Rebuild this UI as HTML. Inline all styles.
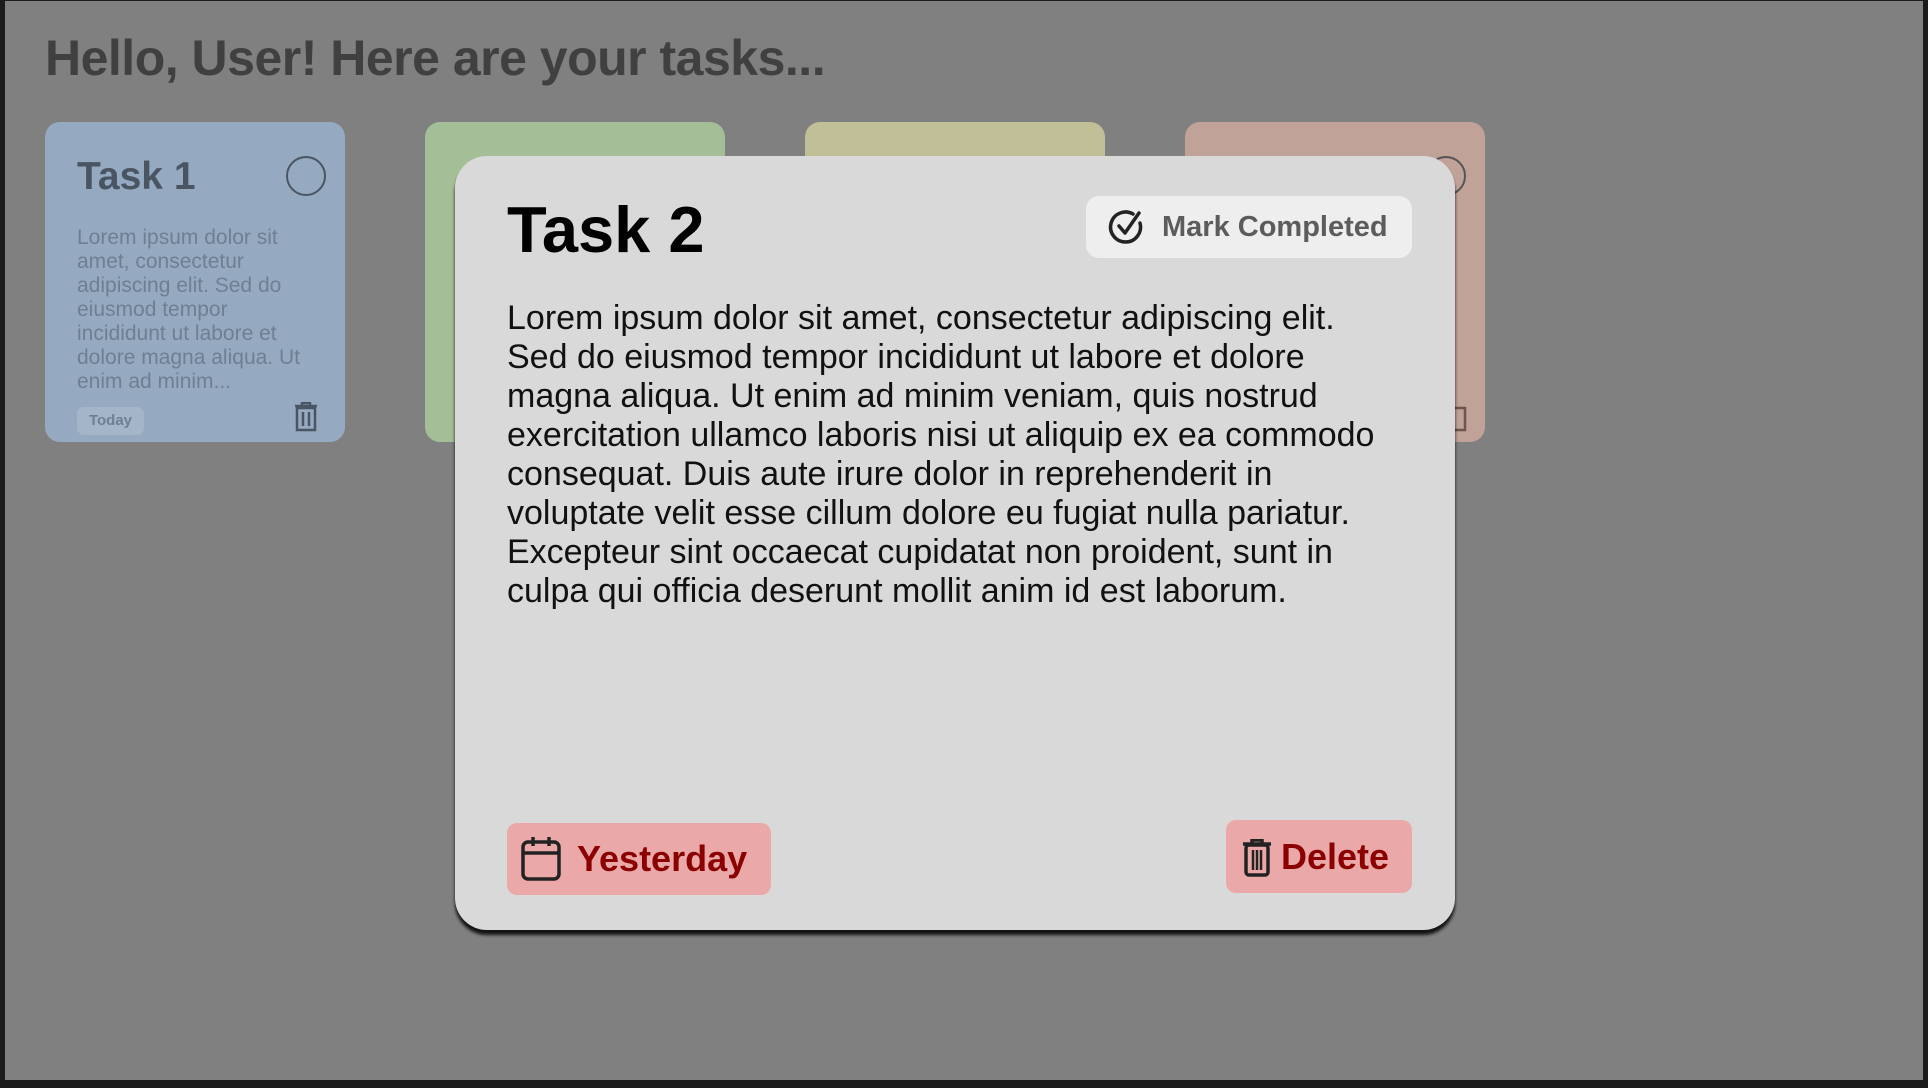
<!DOCTYPE html>
<html><head><meta charset="utf-8"><style>
*{margin:0;padding:0;box-sizing:border-box}
html,body{width:1928px;height:1088px;overflow:hidden;background:#1c1c1c;font-family:"Liberation Sans",Arial,sans-serif}
#bg{position:absolute;left:5px;top:1px;width:1918px;height:1079px;background:#808080}
h1{position:absolute;left:45px;top:29px;font-size:50px;font-weight:bold;color:#404040;letter-spacing:-0.5px}
.card{position:absolute;top:122px;width:300px;height:320px;border-radius:15px}
.c1{left:45px;background:#95aac0}
.c2{left:425px;background:#a4bf98}
.c3{left:805px;background:#c0bf98}
.c4{left:1185px;background:#c0a298}
.ct{position:absolute;left:32px;top:33px;font-size:39px;font-weight:bold;color:#4a5563}
.circ{position:absolute;left:241px;top:34px;width:40px;height:40px;border:2px solid #4a5563;border-radius:50%}
.cb{position:absolute;left:32px;top:104px;width:260px;font-size:21px;line-height:24px;color:#6f7f92;white-space:nowrap}
.today{position:absolute;left:32px;top:285px;width:67px;height:28px;border-radius:7px;background:#a4b5c8;color:#6f7f92;font-size:15px;font-weight:bold;text-align:center;line-height:28px}
.tr{position:absolute;left:248px;top:280px}
#modal{position:absolute;left:455px;top:156px;width:1000px;height:774px;background:#d9d9d9;border-radius:32px;box-shadow:0 5px 3px rgba(0,0,0,0.85)}
#t2{position:absolute;left:52px;top:36px;font-size:65px;font-weight:bold;color:#000}
#mc{position:absolute;left:631px;top:40px;width:326px;height:62px;background:#eeeeee;border-radius:13px}
#mc span{position:absolute;left:76px;top:15px;font-size:29px;font-weight:bold;color:#5c5c5c}
#mc svg{position:absolute;left:20px;top:11px}
#body{position:absolute;left:52px;top:143px;font-size:34px;line-height:39px;color:#111;white-space:nowrap}
.btn{position:absolute;background:#eba8a8;border-radius:10px;color:#8b0000;font-weight:bold;font-size:36px}
#yes{left:52px;top:667px;width:264px;height:72px}
#yes span{position:absolute;left:70px;top:15px}
#yes svg{position:absolute;left:13px;top:13px}
#del{left:771px;top:664px;width:186px;height:73px}
#del span{position:absolute;left:55px;top:16px}
#del svg{position:absolute;left:15px;top:19px}
</style></head><body>
<div id="bg"></div>
<h1>Hello, User! Here are your tasks...</h1>
<div class="card c1"><div class="ct">Task 1</div><div class="circ"></div>
<div class="cb">Lorem ipsum dolor sit<br>amet, consectetur<br>adipiscing elit. Sed do<br>eiusmod tempor<br>incididunt ut labore et<br>dolore magna aliqua. Ut<br>enim ad minim...</div>
<div class="today">Today</div>
<svg class="tr" width="26" height="30" viewBox="0 0 26 30"><path d="M2 4h22M9 4V1h8v3M4 6h18v22H4z" fill="none" stroke="#4a5563" stroke-width="2.5"/><path d="M10 10v14M16 10v14" stroke="#4a5563" stroke-width="2.5"/></svg>
</div>
<div class="card c2"></div>
<div class="card c3"></div>
<div class="card c4"><div class="circ" style="border-color:#555"></div>
<svg class="tr" style="left:258px" width="26" height="30" viewBox="0 0 26 30"><path d="M4 6h18v22H4z" fill="none" stroke="#6a5550" stroke-width="2.5"/></svg></div>
<div id="modal">
<div id="t2">Task 2</div>
<div id="mc"><svg width="40" height="40" viewBox="0 0 40 40"><path d="M34 16A15 15 0 1 1 27 7" fill="none" stroke="#222" stroke-width="3.5" stroke-linecap="round"/><path d="M13 19l6 7L33 6" fill="none" stroke="#222" stroke-width="3.5" stroke-linecap="round" stroke-linejoin="round"/></svg><span>Mark Completed</span></div>
<div id="body">Lorem ipsum dolor sit amet, consectetur adipiscing elit.<br>Sed do eiusmod tempor incididunt ut labore et dolore<br>magna aliqua. Ut enim ad minim veniam, quis nostrud<br>exercitation ullamco laboris nisi ut aliquip ex ea commodo<br>consequat. Duis aute irure dolor in reprehenderit in<br>voluptate velit esse cillum dolore eu fugiat nulla pariatur.<br>Excepteur sint occaecat cupidatat non proident, sunt in<br>culpa qui officia deserunt mollit anim id est laborum.</div>
<div class="btn" id="yes"><svg width="42" height="46" viewBox="0 0 42 46"><rect x="3" y="6" width="36" height="37" rx="5" fill="none" stroke="#222" stroke-width="3.5"/><path d="M3 17h36M13 1v9M29 1v9" stroke="#222" stroke-width="3.5"/></svg><span>Yesterday</span></div>
<div class="btn" id="del"><svg width="32" height="38" viewBox="0 0 32 38"><path d="M2 5h28M11 5V1h10v4" fill="none" stroke="#222" stroke-width="3.5"/><rect x="5" y="6" width="22" height="30" rx="3" fill="none" stroke="#222" stroke-width="3.5"/><path d="M12 11v20M16 11v20M20 11v20" stroke="#222" stroke-width="2.5"/></svg><span>Delete</span></div>
</div>
</body></html>
